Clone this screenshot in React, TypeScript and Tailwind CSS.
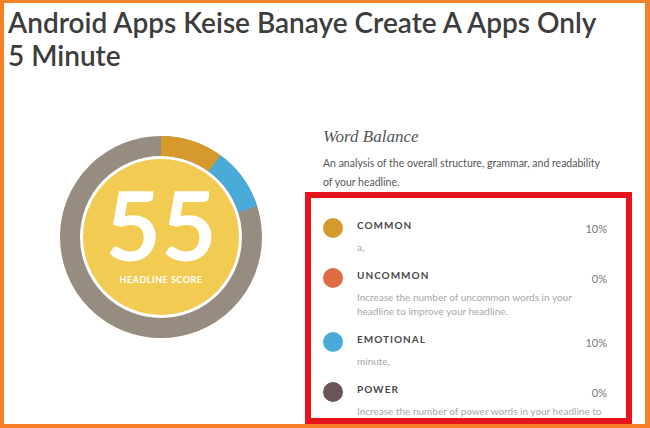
const ROWS = [
  { label: "COMMON", pct: "10%", color: "bg-[#d6992b]", desc: "a," },
  { label: "UNCOMMON", pct: "0%", color: "bg-[#de6c45]", desc: "Increase the number of uncommon words in your headline to improve your headline." },
  { label: "EMOTIONAL", pct: "10%", color: "bg-[#4aaad8]", desc: "minute," },
  { label: "POWER", pct: "0%", color: "bg-[#6b5458]", desc: "Increase the number of power words in your headline to improve your headline." },
];

const R = 91;
const C = 2 * Math.PI * R;

function Donut() {
  return (
    <div className="relative w-[202px] h-[202px]">
      <svg width="202" height="202" viewBox="0 0 202 202">
        <circle cx="101" cy="101" r={R} fill="none" stroke="#978c80" strokeWidth="20" />
        <g transform="rotate(-90 101 101)">
          <circle cx="101" cy="101" r={R} fill="none" stroke="#d6992b" strokeWidth="20" strokeDasharray={`${C * 0.1} ${C}`} />
          <circle cx="101" cy="101" r={R} fill="none" stroke="#4aaad8" strokeWidth="20" strokeDasharray={`${C * 0.1} ${C}`} strokeDashoffset={-C * 0.1} />
        </g>
        <circle cx="101" cy="101" r="78" fill="#f2cb52" />
      </svg>
      <div className="absolute inset-0 flex flex-col items-center text-white font-['Lato',sans-serif]">
        <div className="mt-[53px] text-[96px] leading-[70px] font-bold">55</div>
        <div className="mt-[14px] text-[9px] leading-[13px] font-bold tracking-[0.5px]">HEADLINE SCORE</div>
      </div>
    </div>
  );
}

export default function App() {
  return (
    <div className="w-[650px] h-[428px] overflow-hidden bg-white border-t-[3px] border-l-[4px] border-r-[5px] border-b-[4px] border-[#f58025] font-['Lato',sans-serif]">
      <h1 className="pl-[4px] pt-[3px] text-[28px] leading-[33px] font-semibold text-[#3d3d3d]">
        Android Apps Keise Banaye Create A Apps Only
        <br />5 Minute
      </h1>
      <div className="flex">
        <div className="w-[301px] shrink-0 pl-[56px] pt-[64px]">
          <Donut />
        </div>
        <div className="w-[327px] shrink-0 pt-[54px]">
          <h2 className="pl-[18px] font-['Liberation_Serif',serif] italic text-[17px] leading-[22px] text-[#555]">Word Balance</h2>
          <p className="pl-[18px] mt-[6px] pr-[26px] text-[10.5px] leading-[19px] text-[#555]">
            An analysis of the overall structure, grammar, and readability of your headline.
          </p>
          <div className="h-[232px] border-[6px] border-[#e8141c] overflow-hidden pl-[12px] pr-[19px] pt-[20px] flex flex-col gap-[14px]">
            {ROWS.map((r) => (
              <div key={r.label} className="flex shrink-0">
                <div className={`w-[20px] h-[20px] rounded-full shrink-0 ${r.color}`} />
                <div className="ml-[14px] flex-1">
                  <div className="flex justify-between h-[14px]">
                    <span className="text-[10px] leading-[14px] font-bold tracking-[1px] text-[#4a4a4a]">{r.label}</span>
                    <span className="pt-[4px] text-[11px] leading-[14px] text-[#777]">{r.pct}</span>
                  </div>
                  <p className="mt-[8px] text-[10px] leading-[14px] text-[#a8a8a8]">{r.desc}</p>
                </div>
              </div>
            ))}
          </div>
        </div>
      </div>
    </div>
  );
}
